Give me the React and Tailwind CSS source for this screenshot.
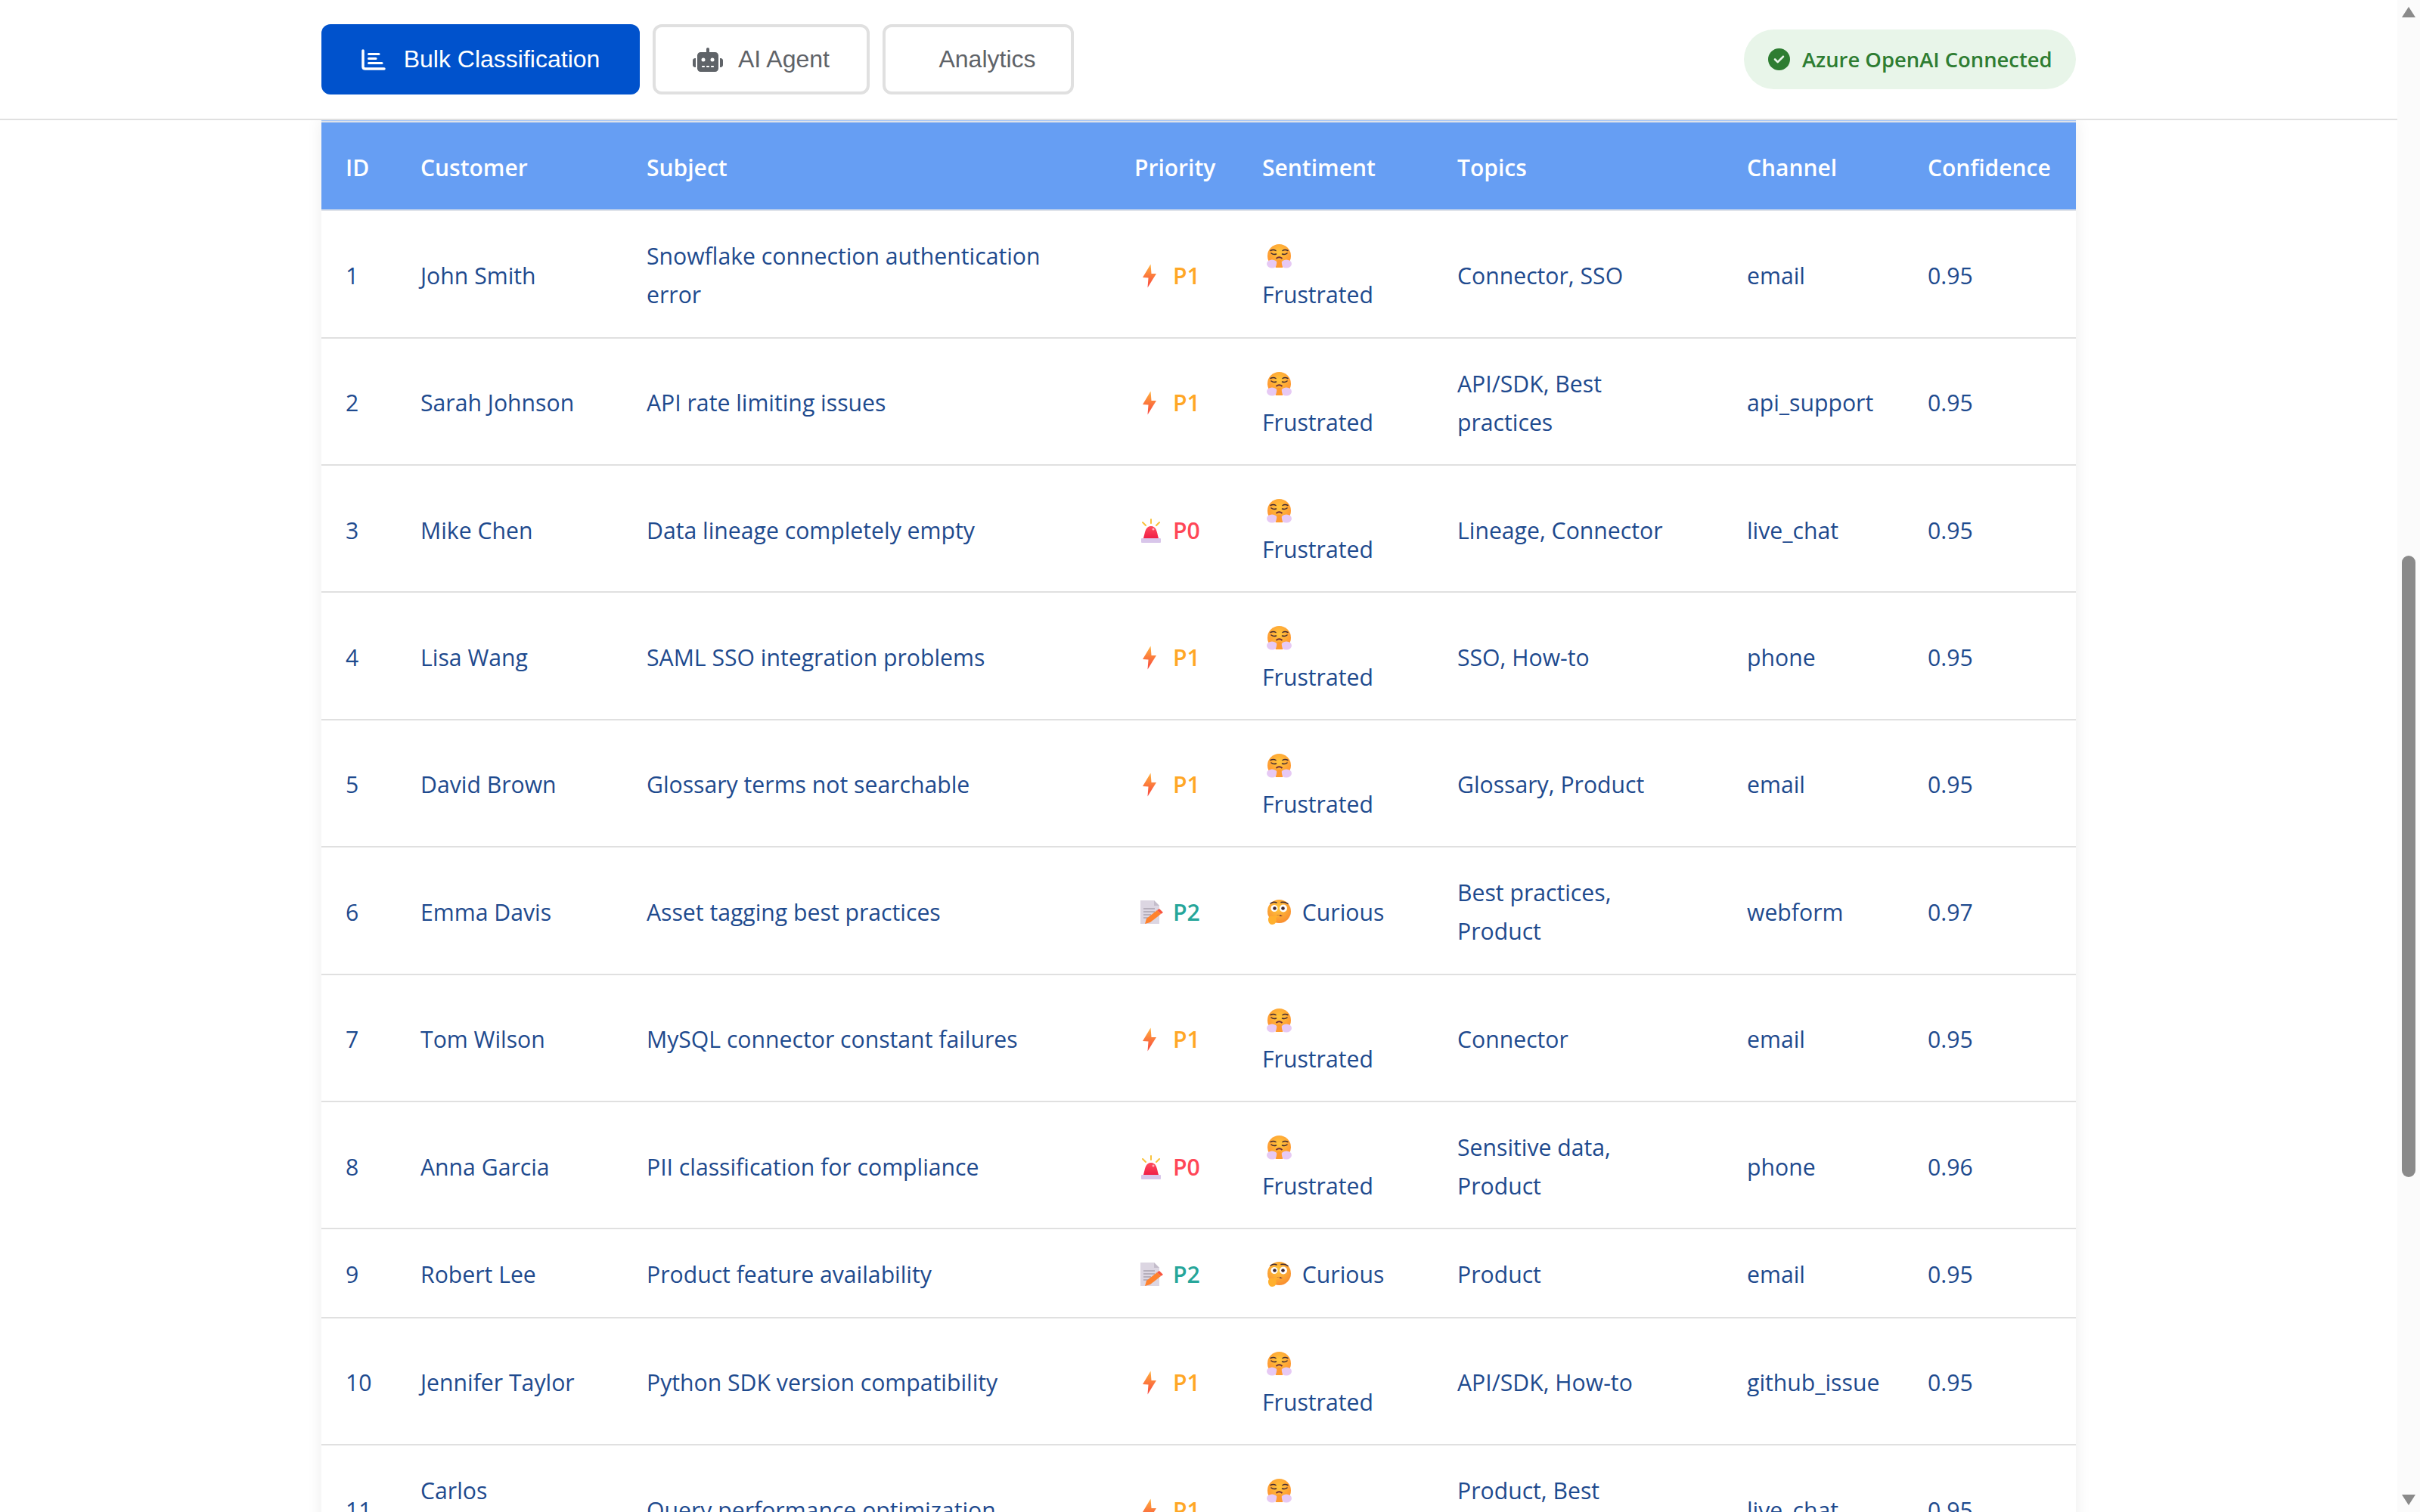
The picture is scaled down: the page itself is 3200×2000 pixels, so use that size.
import React from "react";
import { FaRobot, FaCircleCheck } from "react-icons/fa6";

function ChartIcon() {
  return (
    <svg width="32" height="28" viewBox="0 0 32 28" fill="none" stroke="currentColor" strokeLinecap="round" strokeWidth="3.500">
      <path d="M2 2V23.500Q2 26 5 26H30" />
      <path d="M9.500 6.500H23" strokeWidth="3" />
      <path d="M9.500 12.500H19" strokeWidth="3" />
      <path d="M9.500 18.500H27" strokeWidth="3" />
    </svg>
  );
}

function Zap() {
  return (
    <svg width="32" height="32" viewBox="0 0 32 32">
      <defs>
        <linearGradient id="zapg" x1="0.5" y1="0" x2="0.5" y2="1">
          <stop offset="0" stopColor="#ffb13b" />
          <stop offset="1" stopColor="#f8433f" />
        </linearGradient>
      </defs>
      <path d="M15.500 0.500 L5 18 L12.500 18.500 L11.500 31.500 L23 13 L16.500 13 Z" fill="url(#zapg)" />
    </svg>
  );
}

function Siren() {
  return (
    <svg width="32" height="32" viewBox="0 0 32 32">
      <defs>
        <linearGradient id="sirg" x1="0" y1="0" x2="0" y2="1">
          <stop offset="0" stopColor="#ff4d5e" />
          <stop offset="1" stopColor="#f01f47" />
        </linearGradient>
      </defs>
      <path d="M16 1v5M5 5l4 4M27 5l-4 4" stroke="#f9c23c" strokeWidth="2" strokeLinecap="round" />
      <path d="M6 26 C8 20 8 10 16 10 C24 10 24 20 26 26 Z" fill="url(#sirg)" />
      <rect x="3" y="26" width="26" height="6" rx="1" fill="#d8c6ea" />
      <circle cx="19" cy="14" r="1.500" fill="#ffb0b8" />
    </svg>
  );
}

function Memo() {
  return (
    <svg width="32" height="32" viewBox="0 0 32 32">
      <path d="M2 0 H20 L27 7 V31 H2 Z" fill="#dcd6e2" />
      <path d="M20 0 L27 7 H20 Z" fill="#c4bdcb" />
      <path d="M6 11h15M6 15h15M6 19h10M6 23h6" stroke="#a9a3b0" strokeWidth="1.500" />
      <path d="M8 31 L10 24 L24 13 L29 18 L15 29 Z" fill="#ff822d" />
      <path d="M24 13 L27 11 L32 16 L29 18 Z" fill="#f8543f" />
    </svg>
  );
}

function Steam() {
  return (
    <svg width="33" height="32" viewBox="0 0 33 32">
      <defs>
        <radialGradient id="fc" cx="0.5" cy="0.35" r="0.7">
          <stop offset="0" stopColor="#ffc83d" />
          <stop offset="1" stopColor="#ff8a2e" />
        </radialGradient>
      </defs>
      <circle cx="16.500" cy="15.500" r="15.500" fill="url(#fc)" />
      <path d="M5 8.500q4-2 7 0M28 8.500q-4-2-7 0M6 12q3 2.500 6.500 1M27 12q-3 2.500-6.500 1" stroke="#402a32" strokeWidth="1.500" fill="none" strokeLinecap="round" />
      <path d="M12.500 19q4-3.500 8 0" stroke="#6b2b3a" strokeWidth="1.800" fill="none" />
      <ellipse cx="7" cy="26" rx="7" ry="5.500" fill="#e6c9f4" />
      <ellipse cx="26" cy="26" rx="7" ry="5.500" fill="#e6c9f4" />
      <path d="M12 31 L14 21 H19 L21 31 Z" fill="#ff9a2e" />
    </svg>
  );
}

function Think() {
  return (
    <svg width="33" height="33" viewBox="0 0 33 33">
      <defs>
        <radialGradient id="tc" cx="0.45" cy="0.35" r="0.7">
          <stop offset="0" stopColor="#ffc83d" />
          <stop offset="1" stopColor="#f98a2e" />
        </radialGradient>
      </defs>
      <circle cx="16.500" cy="15.500" r="15.500" fill="url(#tc)" />
      <circle cx="10" cy="11.500" r="4.500" fill="#fff" />
      <circle cx="22" cy="11.500" r="5" fill="#fff" />
      <circle cx="10.500" cy="11.500" r="2.300" fill="#402a32" />
      <circle cx="21.500" cy="11.500" r="2.300" fill="#402a32" />
      <path d="M5 5q4-3 8-1M19 3.500q5-1 9 2" stroke="#402a32" strokeWidth="1.500" fill="none" strokeLinecap="round" />
      <path d="M12 22q4-4 9 0z" fill="#6b2b3a" />
      <path d="M2 26 C2 22 5 21 8 22 L17 20 V22 L12 24 C14 28 12 33 7 33 C4 33 2 30 2 26Z" fill="#ffb02e" />
    </svg>
  );
}

const face = { f: { Icon: Steam, label: "Frustrated" }, c: { Icon: Think, label: "Curious" } };
const prio = {
  P0: { Icon: Siren, cls: "text-[#ff4757]" },
  P1: { Icon: Zap, cls: "text-[#ffa726]" },
  P2: { Icon: Memo, cls: "text-[#26a69a]" },
};

const rows = [
  [1, "John Smith", "Snowflake connection authentication error", "P1", "f", "Connector, SSO", "email", "0.95"],
  [2, "Sarah Johnson", "API rate limiting issues", "P1", "f", "API/SDK, Best practices", "api_support", "0.95"],
  [3, "Mike Chen", "Data lineage completely empty", "P0", "f", "Lineage, Connector", "live_chat", "0.95"],
  [4, "Lisa Wang", "SAML SSO integration problems", "P1", "f", "SSO, How-to", "phone", "0.95"],
  [5, "David Brown", "Glossary terms not searchable", "P1", "f", "Glossary, Product", "email", "0.95"],
  [6, "Emma Davis", "Asset tagging best practices", "P2", "c", "Best practices, Product", "webform", "0.97"],
  [7, "Tom Wilson", "MySQL connector constant failures", "P1", "f", "Connector", "email", "0.95"],
  [8, "Anna Garcia", "PII classification for compliance", "P0", "f", "Sensitive data, Product", "phone", "0.96"],
  [9, "Robert Lee", "Product feature availability", "P2", "c", "Product", "email", "0.95"],
  [10, "Jennifer Taylor", "Python SDK version compatibility", "P1", "f", "API/SDK, How-to", "github_issue", "0.95"],
  [11, "Carlos Rodriguez", "Query performance optimization", "P1", "f", "Product, Best practices", "live_chat", "0.95"],
];

const heads = ["ID", "Customer", "Subject", "Priority", "Sentiment", "Topics", "Channel", "Confidence"];
const th = "px-8 pt-[34px] pb-[30px] text-left font-semibold text-white whitespace-nowrap";
const td = "px-8 pt-[34px] pb-[30px] align-middle";
const iconBox = "inline-flex justify-center align-[-5px]";

export default function App() {
  return (
    <div className="flex h-screen overflow-hidden bg-white text-[30.2px] leading-[51.2px] font-['Open_Sans',sans-serif]">
      <div className="flex-1 min-w-0 flex flex-col">
        <header className="relative z-10 h-[159px] shrink-0 bg-white border-b-2 border-[#e0e0e0] flex items-center justify-between px-[425px]">
          <nav className="flex gap-[17px] font-['Liberation_Sans',sans-serif] text-[32px]">
            <button className="h-[93px] w-[421px] rounded-xl bg-[#0052cc] text-white flex items-center justify-center gap-[24px]">
              <ChartIcon />
              Bulk Classification
            </button>
            <button className="h-[93px] w-[287px] rounded-xl border-4 border-[#e0e0e0] text-[#5f6368] flex items-center justify-center gap-[20px]">
              <FaRobot className="text-[40px]" />
              AI Agent
            </button>
            <button className="h-[93px] w-[253px] rounded-xl border-4 border-[#e0e0e0] text-[#5f6368] flex items-center justify-center pl-[24px]">
              Analytics
            </button>
          </nav>
          <div className="h-[79px] w-[439px] rounded-full bg-[#e8f5e9] text-[#2e7d32] font-semibold text-[27.4px] flex items-center pl-[32px] gap-[16px]">
            <FaCircleCheck className="text-[29px]" />
            Azure OpenAI Connected
          </div>
        </header>
        <main className="flex-1 min-h-0 px-[425px]">
          <div className="w-[2320px] bg-white border-t border-[#a5c5f7] shadow-[0_0_20px_rgba(0,0,0,0.08)]">
            <div className="border-t-2 border-[#dfe3ea]">
              <table className="w-full table-fixed border-collapse">
                <colgroup>
                  <col className="w-[99px]" />
                  <col className="w-[299px]" />
                  <col className="w-[645px]" />
                  <col className="w-[169px]" />
                  <col className="w-[258px]" />
                  <col className="w-[383px]" />
                  <col className="w-[239px]" />
                  <col className="w-[228px]" />
                </colgroup>
                <thead>
                  <tr className="bg-[#669ef3] border-b-2 border-[#dfe3ea] text-[30px]">
                    {heads.map((h) => (
                      <th key={h} className={th}>{h}</th>
                    ))}
                  </tr>
                </thead>
                <tbody className="text-[#1e4a8e]">
                  {rows.map((r) => {
                    const P = prio[r[3]];
                    const F = face[r[4]];
                    return (
                      <tr key={r[0]} className="border-b-2 border-[#e0e0e0]">
                        <td className={td}>{r[0]}</td>
                        <td className={td}>
                          <div className="max-w-[232px]">{r[1]}</div>
                        </td>
                        <td className={td}>{r[2]}</td>
                        <td className={td}>
                          <span className={`${P.cls} font-semibold whitespace-nowrap`}>
                            <span className={`${iconBox} w-[44px] mr-[7px]`}>
                              <P.Icon />
                            </span>
                            {r[3]}
                          </span>
                        </td>
                        <td className={td}>
                          <span className={`${iconBox} w-[45px]`}>
                            <F.Icon />
                          </span>{" "}
                          {F.label}
                        </td>
                        <td className={td}>
                          <div className="max-w-[300px]">{r[5]}</div>
                        </td>
                        <td className={td}>{r[6]}</td>
                        <td className={td}>{r[7]}</td>
                      </tr>
                    );
                  })}
                </tbody>
              </table>
            </div>
          </div>
        </main>
      </div>
      <aside className="w-[30px] shrink-0 bg-[#fbfbfb] flex flex-col items-center">
        <div className="mt-[9px] w-0 h-0 border-x-[9px] border-x-transparent border-b-[14px] border-b-[#8a8a8a]" />
        <div className="mt-[712px] w-[18px] h-[822px] rounded-full bg-[#8a8a8a]" />
        <div className="mt-auto mb-[9px] w-0 h-0 border-x-[9px] border-x-transparent border-t-[14px] border-t-[#8a8a8a]" />
      </aside>
    </div>
  );
}
